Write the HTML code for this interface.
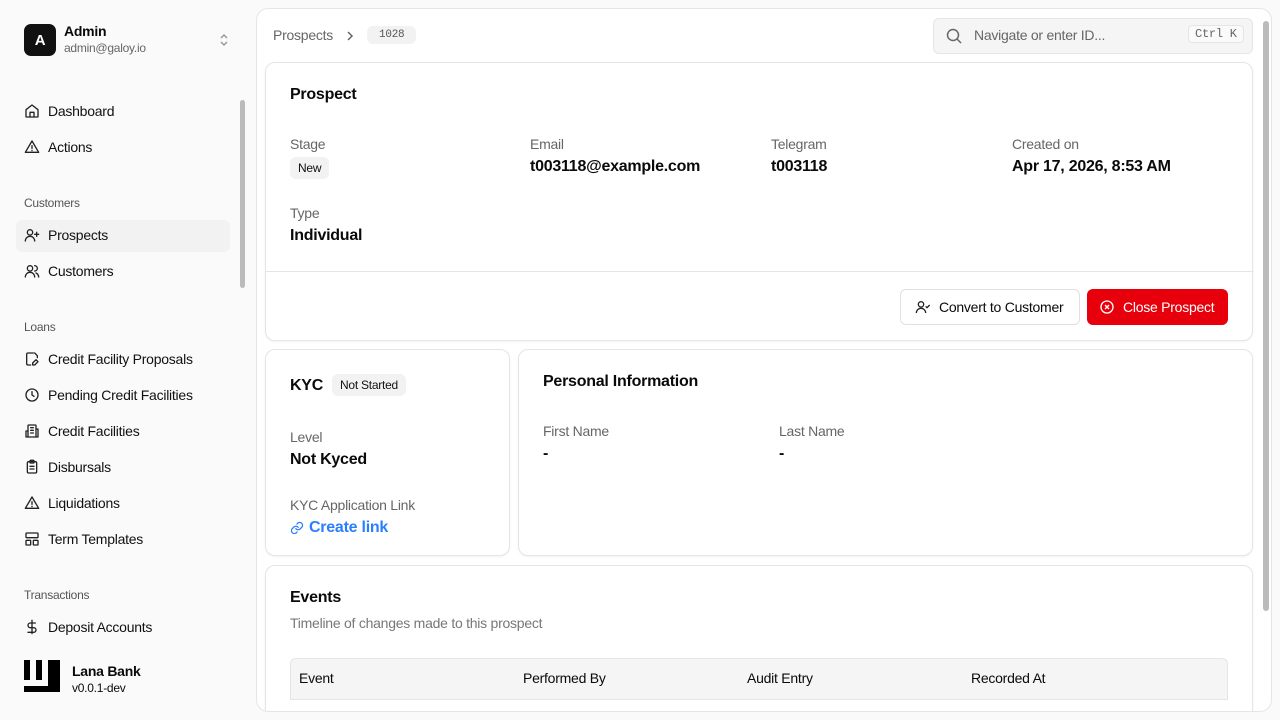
<!DOCTYPE html>
<html><head><style>
*{box-sizing:border-box;margin:0;padding:0}
body{width:1280px;height:720px;overflow:hidden;background:#fafafa;font-family:"Liberation Sans",sans-serif;color:#0a0a0a;position:relative;letter-spacing:-0.25px}
.abs{position:absolute}
.nav{position:absolute;left:24px;font-size:14px;display:flex;align-items:center;gap:8px;color:#111}
.nav svg{width:16px;height:16px;fill:none;stroke:#222;stroke-width:2;stroke-linecap:round;stroke-linejoin:round}
.sec{position:absolute;left:24px;font-size:12px;color:#555}
.main{position:absolute;left:256px;top:8px;width:1016px;height:704px;background:#fff;border:1px solid #e5e5e5;border-radius:12px;overflow:hidden}
.card{position:absolute;background:#fff;border:1px solid #e5e5e5;border-radius:10px;box-shadow:0 1px 2px rgba(0,0,0,.05)}
.lbl{position:absolute;font-size:14px;color:#666}
.val{position:absolute;font-size:16px;font-weight:bold;color:#0a0a0a}
.badge{position:absolute;background:#f2f2f2;border-radius:6px;font-size:12px;padding:4px 8px;color:#111}
.h{position:absolute;font-size:16px;font-weight:bold}
</style></head><body>
<div class="abs" style="left:24px;top:24px;width:32px;height:32px;background:#111;border-radius:7px;color:#fff;font-weight:bold;font-size:15px;display:flex;align-items:center;justify-content:center">A</div>
<div class="abs" style="left:64px;top:23px;font-size:14px;font-weight:bold">Admin</div>
<div class="abs" style="left:64px;top:41px;font-size:12px;color:#666">admin@galoy.io</div>
<svg class="abs" style="left:217px;top:32px" width="14" height="16" viewBox="0 0 14 16" fill="none" stroke="#999" stroke-width="1.5"><path d="M4 6l3-3 3 3M4 10l3 3 3-3"/></svg>

<div class="nav" style="top:103px"><svg viewBox="0 0 24 24"><path d="M3 10l9-7 9 7v10a1 1 0 0 1-1 1H4a1 1 0 0 1-1-1z"/><path d="M9 21v-7h6v7"/></svg>Dashboard</div>
<div class="nav" style="top:139px"><svg viewBox="0 0 24 24"><path d="M12 3L2 20h20z"/><path d="M12 10v4M12 17v.5"/></svg>Actions</div>
<div class="sec" style="top:196px">Customers</div>
<div class="abs" style="left:16px;top:220px;width:214px;height:32px;background:#f2f2f2;border-radius:6px"></div>
<div class="nav" style="top:227px"><svg viewBox="0 0 24 24"><circle cx="9" cy="8" r="4"/><path d="M2 21a7 7 0 0 1 14 0M19 8v6M16 11h6"/></svg>Prospects</div>
<div class="nav" style="top:263px"><svg viewBox="0 0 24 24"><circle cx="9" cy="8" r="4"/><path d="M2 21a7 7 0 0 1 14 0M16 4a4 4 0 0 1 0 8M22 21a7 7 0 0 0-4-6"/></svg>Customers</div>
<div class="sec" style="top:320px">Loans</div>
<div class="nav" style="top:351px"><svg viewBox="0 0 24 24"><path d="M14 3H6a2 2 0 0 0-2 2v14a2 2 0 0 0 2 2h4M20 10V7l-4-4"/><path d="M18 13l3 3-5 5h-3v-3z"/></svg>Credit Facility Proposals</div>
<div class="nav" style="top:387px"><svg viewBox="0 0 24 24"><circle cx="12" cy="12" r="9"/><path d="M12 7v5l3 2"/></svg>Pending Credit Facilities</div>
<div class="nav" style="top:423px"><svg viewBox="0 0 24 24"><rect x="6" y="3" width="12" height="18" rx="1"/><path d="M6 12H3v9h3M18 9h3v12h-3M10 7h4M10 11h4M10 15h4"/></svg>Credit Facilities</div>
<div class="nav" style="top:459px"><svg viewBox="0 0 24 24"><rect x="5" y="4" width="14" height="17" rx="2"/><rect x="9" y="2" width="6" height="4" rx="1"/><path d="M9 11h6M9 15h6"/></svg>Disbursals</div>
<div class="nav" style="top:495px"><svg viewBox="0 0 24 24"><path d="M12 3L2 20h20z"/><path d="M12 10v4M12 17v.5"/></svg>Liquidations</div>
<div class="nav" style="top:531px"><svg viewBox="0 0 24 24"><rect x="3" y="3" width="18" height="7" rx="1"/><rect x="3" y="14" width="7" height="7" rx="1"/><rect x="14" y="14" width="7" height="7" rx="1"/></svg>Term Templates</div>
<div class="sec" style="top:588px">Transactions</div>
<div class="nav" style="top:619px"><svg viewBox="0 0 24 24"><path d="M12 2v20M17 6H9.5a3.5 3.5 0 0 0 0 7h5a3.5 3.5 0 0 1 0 7H6"/></svg>Deposit Accounts</div>
<div class="abs" style="left:240px;top:100px;width:5px;height:188px;background:#bbb;border-radius:3px"></div>
<svg class="abs" style="left:24px;top:660px" width="36" height="32"><rect x="0" y="0" width="6" height="20"/><rect x="12" y="0" width="6" height="20"/><rect x="24" y="0" width="12" height="32"/><rect x="0" y="26" width="36" height="6"/></svg>
<div class="abs" style="left:72px;top:663px;font-size:14px;font-weight:bold">Lana Bank</div>
<div class="abs" style="left:72px;top:681px;font-size:12px">v0.0.1-dev</div>

<div class="main">
<div class="abs" style="left:16px;top:18px;font-size:14px;color:#666">Prospects</div>
<svg class="abs" style="left:88px;top:21px" width="10" height="12" fill="none" stroke="#666" stroke-width="1.5"><path d="M3 2l4 4-4 4"/></svg>
<div class="abs" style="left:110px;top:17px;background:#f2f2f2;border-radius:6px;padding:3px 12px;font-family:'Liberation Mono',monospace;font-size:11px;color:#555">1028</div>
<div class="abs" style="left:676px;top:9px;width:320px;height:36px;background:#f5f5f5;border:1px solid #e5e5e5;border-radius:6px"></div>
<svg class="abs" style="left:689px;top:19px" width="16" height="16" fill="none" stroke="#666" stroke-width="1.5"><circle cx="7" cy="7" r="5.5"/><path d="M11 11l4 4"/></svg>
<div class="abs" style="left:717px;top:18px;font-size:14px;color:#666">Navigate or enter ID...</div>
<div class="abs" style="left:931px;top:16px;border:1px solid #e5e5e5;background:#fafafa;border-radius:4px;padding:1px 6px;font-family:'Liberation Mono',monospace;font-size:12px;color:#666">Ctrl K</div>

<div class="card" style="left:8px;top:53px;width:988px;height:279px">
<div class="h" style="left:24px;top:23px">Prospect</div>
<div class="lbl" style="left:24px;top:73px">Stage</div>
<div class="badge" style="left:24px;top:94px">New</div>
<div class="lbl" style="left:264px;top:73px">Email</div><div class="val" style="left:264px;top:95px">t003118@example.com</div>
<div class="lbl" style="left:505px;top:73px">Telegram</div><div class="val" style="left:505px;top:95px">t003118</div>
<div class="lbl" style="left:746px;top:73px">Created on</div><div class="val" style="left:746px;top:95px">Apr 17, 2026, 8:53 AM</div>
<div class="lbl" style="left:24px;top:142px">Type</div><div class="val" style="left:24px;top:164px">Individual</div>
<div class="abs" style="left:0;top:208px;width:988px;height:1px;background:#e5e5e5"></div>
<div class="abs" style="left:634px;top:226px;width:180px;height:36px;border:1px solid #e0e0e0;border-radius:6px;font-size:14px;display:flex;align-items:center;padding-left:14px;gap:8px"><svg width="16" height="16" viewBox="0 0 24 24" fill="none" stroke="#222" stroke-width="2"><circle cx="9" cy="8" r="4"/><path d="M2 21a7 7 0 0 1 14 0M16 11l2 2 4-4"/></svg>Convert to Customer</div>
<div class="abs" style="left:821px;top:226px;width:141px;height:36px;background:#e7000b;border-radius:6px;font-size:14px;color:#fff;display:flex;align-items:center;padding-left:12px;gap:8px"><svg width="16" height="16" viewBox="0 0 24 24" fill="none" stroke="#fff" stroke-width="2"><circle cx="12" cy="12" r="9"/><path d="M9 9l6 6M15 9l-6 6"/></svg>Close Prospect</div>
</div>

<div class="card" style="left:8px;top:340px;width:245px;height:207px">
<div class="h" style="left:24px;top:27px">KYC</div>
<div class="badge" style="left:66px;top:24px">Not Started</div>
<div class="lbl" style="left:24px;top:79px">Level</div><div class="val" style="left:24px;top:101px">Not Kyced</div>
<div class="lbl" style="left:24px;top:147px">KYC Application Link</div>
<div class="abs" style="left:24px;top:169px;font-size:16px;font-weight:bold;color:#2b7fff;display:flex;align-items:center;gap:5px"><svg width="14" height="14" viewBox="0 0 24 24" fill="none" stroke="#2b7fff" stroke-width="2.2" stroke-linecap="round"><path d="M10 13a5 5 0 0 0 7.5.5l3-3a5 5 0 0 0-7-7l-1.7 1.7"/><path d="M14 11a5 5 0 0 0-7.5-.5l-3 3a5 5 0 0 0 7 7l1.7-1.7"/></svg>Create link</div>
</div>

<div class="card" style="left:261px;top:340px;width:735px;height:207px">
<div class="h" style="left:24px;top:23px">Personal Information</div>
<div class="lbl" style="left:24px;top:73px">First Name</div><div class="val" style="left:24px;top:95px">-</div>
<div class="lbl" style="left:260px;top:73px">Last Name</div><div class="val" style="left:260px;top:95px">-</div>
</div>

<div class="card" style="left:8px;top:556px;width:988px;height:160px">
<div class="h" style="left:24px;top:23px">Events</div>
<div class="abs" style="left:24px;top:49px;font-size:14px;color:#777">Timeline of changes made to this prospect</div>
<div class="abs" style="left:24px;top:92px;width:938px;height:42px;background:#f5f5f5;border:1px solid #e5e5e5;border-radius:6px 6px 0 0;font-size:14px">
<span class="abs" style="left:8px;top:11px">Event</span>
<span class="abs" style="left:232px;top:11px">Performed By</span>
<span class="abs" style="left:456px;top:11px">Audit Entry</span>
<span class="abs" style="left:680px;top:11px">Recorded At</span>
</div>
</div>
<div class="abs" style="left:1006px;top:12px;width:6px;height:590px;background:#bbb;border-radius:3px"></div>
</div>
</body></html>
